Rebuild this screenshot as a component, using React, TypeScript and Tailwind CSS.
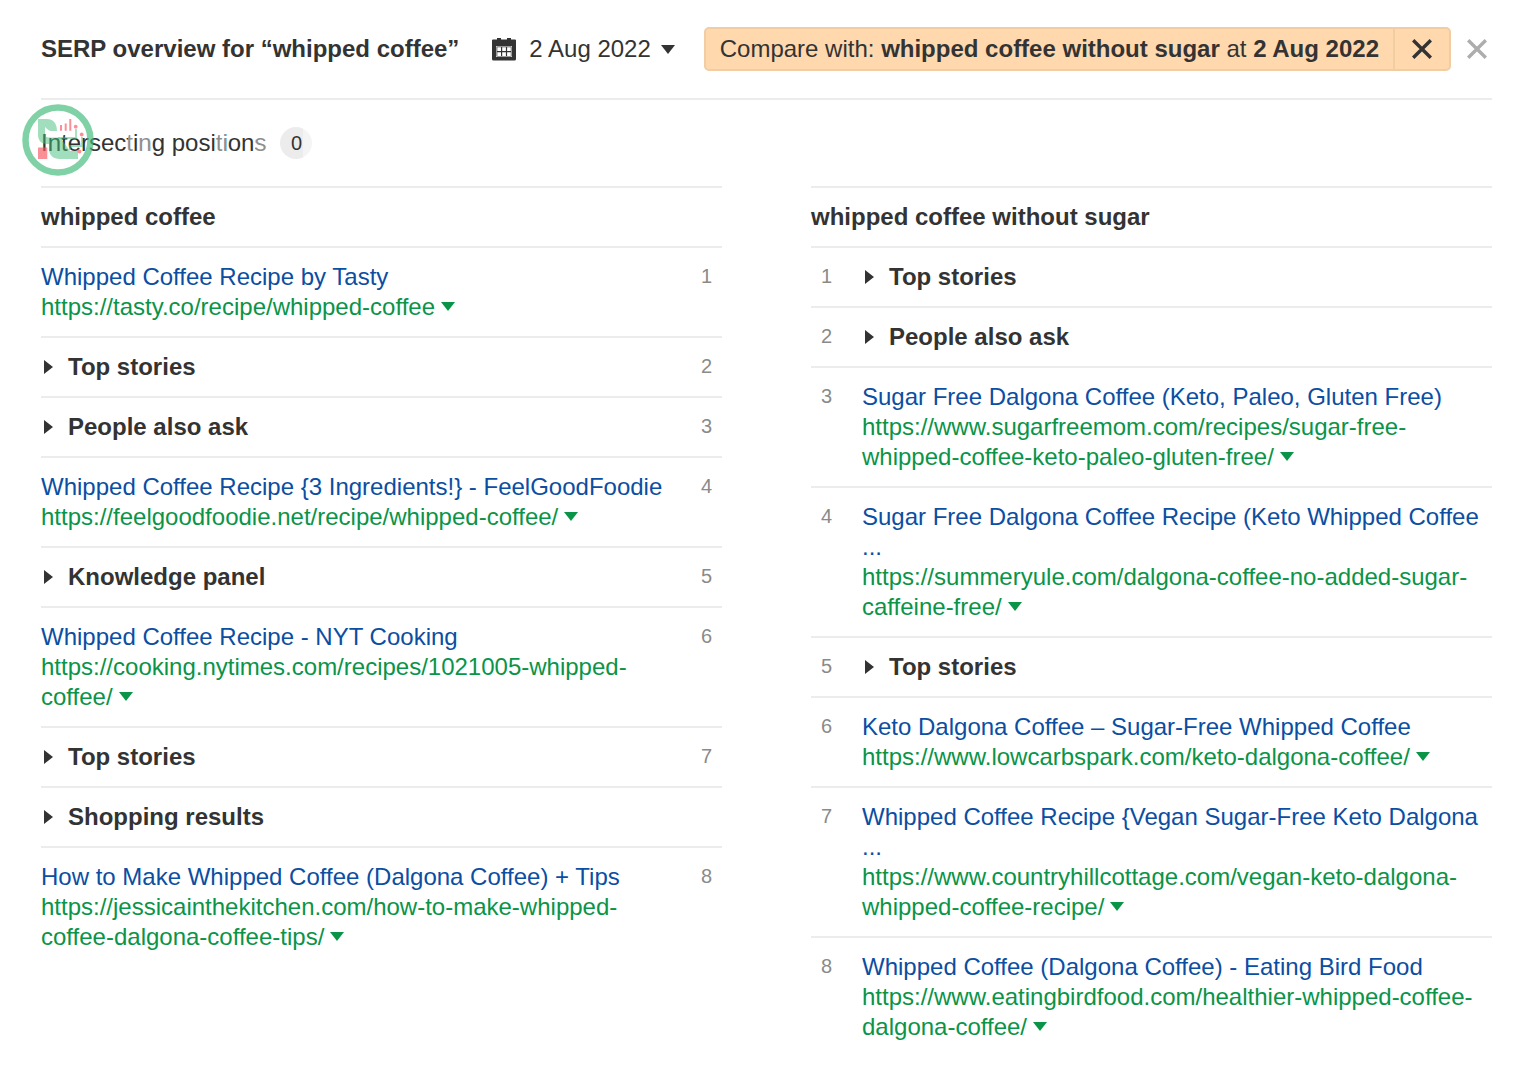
import type { ReactNode } from "react";
import clsx from "clsx";

type Entry =
  | { kind: "page"; position: number; title: string; url: string }
  | { kind: "feature"; position?: number; title: string };

const LEFT: Entry[] = [
  { kind: "page", position: 1, title: "Whipped Coffee Recipe by Tasty", url: "https://tasty.co/recipe/whipped-coffee" },
  { kind: "feature", position: 2, title: "Top stories" },
  { kind: "feature", position: 3, title: "People also ask" },
  { kind: "page", position: 4, title: "Whipped Coffee Recipe {3 Ingredients!} - FeelGoodFoodie", url: "https://feelgoodfoodie.net/recipe/whipped-coffee/" },
  { kind: "feature", position: 5, title: "Knowledge panel" },
  { kind: "page", position: 6, title: "Whipped Coffee Recipe - NYT Cooking", url: "https://cooking.nytimes.com/recipes/1021005-whipped-coffee/" },
  { kind: "feature", position: 7, title: "Top stories" },
  { kind: "feature", title: "Shopping results" },
  { kind: "page", position: 8, title: "How to Make Whipped Coffee (Dalgona Coffee) + Tips", url: "https://jessicainthekitchen.com/how-to-make-whipped-coffee-dalgona-coffee-tips/" },
];

const RIGHT: Entry[] = [
  { kind: "feature", position: 1, title: "Top stories" },
  { kind: "feature", position: 2, title: "People also ask" },
  { kind: "page", position: 3, title: "Sugar Free Dalgona Coffee (Keto, Paleo, Gluten Free)", url: "https://www.sugarfreemom.com/recipes/sugar-free-whipped-coffee-keto-paleo-gluten-free/" },
  { kind: "page", position: 4, title: "Sugar Free Dalgona Coffee Recipe (Keto Whipped Coffee ...", url: "https://summeryule.com/dalgona-coffee-no-added-sugar-caffeine-free/" },
  { kind: "feature", position: 5, title: "Top stories" },
  { kind: "page", position: 6, title: "Keto Dalgona Coffee – Sugar-Free Whipped Coffee", url: "https://www.lowcarbspark.com/keto-dalgona-coffee/" },
  { kind: "page", position: 7, title: "Whipped Coffee Recipe {Vegan Sugar-Free Keto Dalgona ...", url: "https://www.countryhillcottage.com/vegan-keto-dalgona-whipped-coffee-recipe/" },
  { kind: "page", position: 8, title: "Whipped Coffee (Dalgona Coffee) - Eating Bird Food", url: "https://www.eatingbirdfood.com/healthier-whipped-coffee-dalgona-coffee/" },
];

function CaretDown() {
  return (
    <svg viewBox="0 0 14 9" className="h-[9px] w-[14px] fill-current" aria-hidden="true">
      <path d="M0 0h14L7 9z" />
    </svg>
  );
}

function CaretRight() {
  return (
    <svg viewBox="0 0 9 14" className="h-[14px] w-[9px] fill-current" aria-hidden="true">
      <path d="M0 0v14l9-7z" />
    </svg>
  );
}

function CalendarIcon() {
  return (
    <svg viewBox="0 0 24 23" className="h-[23px] w-6" aria-hidden="true">
      <path fill="#333" d="M1 1.500h4V0h4v1.500h6V0h4v1.500h4a1 1 0 0 1 1 1v18.500a1.500 1.500 0 0 1-1.500 1.500h-21A1.500 1.500 0 0 1 0 21V2.500a1 1 0 0 1 1-1z" />
      <path fill="#fff" d="M4 8h16v11H4z" />
      <path fill="#333" d="M4.500 8.500h15v10h-15z" />
      <path
        fill="#fff"
        d="M5.300 9.300h3.700v3.700H5.300zM10.200 9.300h3.700v3.700h-3.700zM15.100 9.300h3.700v3.700h-3.700zM5.300 14.200h3.700v3.700H5.300zM10.200 14.200h3.700v3.700h-3.700zM15.100 14.200h3.700v3.700h-3.700z"
      />
    </svg>
  );
}

function CrossIcon() {
  return (
    <svg viewBox="0 0 20 20" className="size-5" fill="none" stroke="currentColor" strokeWidth="3.4" aria-hidden="true">
      <path d="M1.200 1.200l17.600 17.600M18.800 1.200L1.200 18.800" />
    </svg>
  );
}

// Publisher's stamp; its washed-out lettering fades parts of the heading under it
function Watermark() {
  return (
    <svg viewBox="0 0 295 72" className="pointer-events-none absolute -left-[19px] top-[4px] h-[72px] w-[295px]" aria-hidden="true">
      <circle cx="36" cy="36" r="32.500" fill="none" stroke="#44bd7c" strokeOpacity=".68" strokeWidth="6.500" />
      <path
        fill="#44bd7c"
        fillOpacity=".5"
        d="M16 15h9c6 0 10 4 10 12h-5.500c-3 0-4-2-6.500-4v7c0 2.500 1.500 3.500 4 3.500h11l10 13.500h8v8H38c-7 0-11-4-11-10v-5h-2c-6 0-9-4-9-9z"
      />
      <path fill="none" stroke="#44bd7c" strokeOpacity=".5" strokeWidth="1.800" d="M54 25v9H36M60 33v9H48v4" />
      <g fill="#f7555f" fillOpacity=".65">
        <path d="M16 43.500h9.300V55H16zM38 21h2v5.700h-2zM42.700 19.500h2v7.200h-2zM47.300 15h2v11.700h-2z" />
        <circle cx="53.700" cy="22.700" r="1.900" />
        <circle cx="59.700" cy="30.500" r="1.900" />
        <circle cx="57.500" cy="47.500" r="1.900" />
      </g>
      <path fill="#fff" fillOpacity=".45" d="M106 28h6v22h-6zM118 28h10v22h-10zM194 28h10v22h-10zM234 28h11v22h-11zM281 20h13v36h-13z" />
    </svg>
  );
}

function PageLinks({ title, url }: { title: string; url: string }) {
  return (
    <>
      <a href={url} className="block text-[#0b4ea2]">{title}</a>
      <a href={url} className="text-[#0a9448]">{url}</a>
      <button type="button" aria-label="Page details" className="ml-[6px] inline-flex pb-1 align-middle text-[#0a9448]">
        <CaretDown />
      </button>
    </>
  );
}

function Row({ entry, side }: { entry: Entry; side: "left" | "right" }) {
  return (
    <li className={clsx("flex border-t-2 border-[#ececec] py-[14px]", side === "right" && "flex-row-reverse")}>
      <div className={clsx("min-w-0 flex-1", side === "right" && "pr-3")}>
        {entry.kind === "page" ? (
          <PageLinks title={entry.title} url={entry.url} />
        ) : (
          <button type="button" className="flex items-center gap-[15px] pl-[3px] font-bold">
            <CaretRight />
            {entry.title}
          </button>
        )}
      </div>
      <span className={clsx("text-[20px] leading-[28px] text-[#8a8a8a]", side === "left" ? "w-12 pr-[10px] text-right" : "w-[51px] pl-[10px]")}>
        {entry.position}
      </span>
    </li>
  );
}

function Column({ keyword, entries, side }: { keyword: string; entries: Entry[]; side: "left" | "right" }) {
  return (
    <section>
      <h2 className="border-t-2 border-[#ececec] py-[14px] font-bold">{keyword}</h2>
      <ul>
        {entries.map((entry, i) => (
          <Row key={i} entry={entry} side={side} />
        ))}
      </ul>
    </section>
  );
}

function CompareTag({ children }: { children: ReactNode }) {
  return (
    <div className="flex h-11 items-stretch rounded-[5px] border-2 border-[#f0cda3] bg-[#ffd8ae]">
      <span className="flex items-center whitespace-pre px-[14px]">{children}</span>
      <button type="button" aria-label="Remove comparison" className="flex w-[56px] items-center justify-center border-l-2 border-[#f0cda3]">
        <CrossIcon />
      </button>
    </div>
  );
}

export default function App() {
  return (
    <main className="bg-white pb-10 pl-[41px] pr-11 pt-[27px] font-['Liberation_Sans',Arial,sans-serif] text-[24px] leading-[30px] text-[#333]">
      <header className="flex items-center whitespace-nowrap pb-[27px]">
        <h1 className="font-bold">SERP overview for “whipped coffee”</h1>
        <button type="button" className="ml-[33px] flex items-center">
          <CalendarIcon />
          <span className="ml-[13px] mr-[10px]">2 Aug 2022</span>
          <CaretDown />
        </button>
        <div className="ml-auto flex items-center gap-4">
          <CompareTag>
            Compare with: <b>whipped coffee without sugar</b> at <b>2 Aug 2022</b>
          </CompareTag>
          <button type="button" aria-label="Close" className="mr-[5px] text-[#adadad]">
            <CrossIcon />
          </button>
        </div>
      </header>

      <div className="relative flex h-[88px] items-center gap-[14px] border-t-2 border-[#ececec]">
        <span>Intersecting positions</span>
        <span className="flex size-8 items-center justify-center rounded-full bg-[#ececec] text-[20px]">0</span>
        <Watermark />
      </div>

      <div className="grid grid-cols-2 gap-[89px]">
        <Column keyword="whipped coffee" entries={LEFT} side="left" />
        <Column keyword="whipped coffee without sugar" entries={RIGHT} side="right" />
      </div>
    </main>
  );
}
